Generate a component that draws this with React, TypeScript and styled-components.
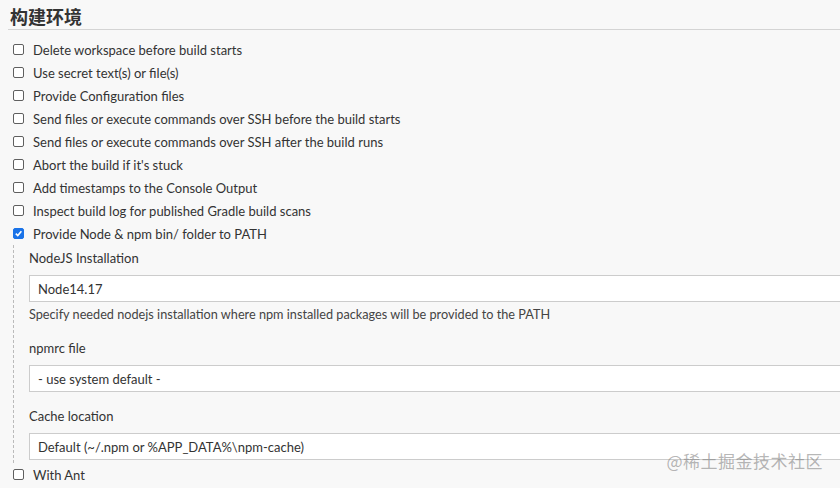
import React from "react";
import styled, { createGlobalStyle } from "styled-components";

const Global = createGlobalStyle`
  html, body { margin: 0; padding: 0; background: #f8f8f8; }
  body { font-family: Lato, "Noto Sans", "Noto Sans CJK SC", sans-serif; color: #333; }
`;

const Page = styled.div`
  width: 840px;
  height: 488px;
  overflow: hidden;
  position: relative;
  background: #f8f8f8;
  padding-left: 8px;
  box-sizing: border-box;
`;

const Title = styled.h2`
  margin: 0;
  padding: 4px 0 0 2px;
  height: 25px;
  font-size: 18px;
  font-weight: 700;
  line-height: 24px;
  color: #333;
  border-bottom: 1px solid #d4d4d4;
  font-family: "Noto Sans CJK SC", sans-serif;
`;

const List = styled.div`
  display: flex;
  flex-direction: column;
  padding-top: 8px;
`;

const Row = styled.label`
  display: flex;
  align-items: center;
  height: 23px;
  font-size: 13px;
  color: #333;
`;

const Box = styled.span<{ checked?: boolean }>`
  width: 11px;
  height: 11px;
  margin: 0 9px 0 5px;
  box-sizing: border-box;
  border-radius: 2px;
  border: 1px solid ${(p) => (p.checked ? "#1a73e8" : "#5f5f5f")};
  background: ${(p) => (p.checked ? "#1a73e8" : "#fff")};
  display: flex;
  align-items: center;
  justify-content: center;
`;

const Nested = styled.div`
  margin-left: 5px;
  border-left: 1px dashed #bbb;
  padding: 2px 0 3px 15px;
  display: flex;
  flex-direction: column;
`;

const FieldLabel = styled.div`
  font-size: 13px;
  line-height: 18px;
  padding: 2px 0 8px;
  color: #333;
`;

const Input = styled.div`
  height: 27px;
  box-sizing: border-box;
  margin-right: -20px;
  background: #fff;
  border: 1px solid #ccc;
  display: flex;
  align-items: center;
  padding-left: 8px;
  font-size: 13px;
  color: #333;
`;

const Help = styled.div`
  font-size: 12.7px;
  color: #444;
  padding: 3px 0 0;
  line-height: 18px;
`;

const Field = styled.div<{ gap: number }>`
  margin-top: ${(p) => p.gap}px;
  display: flex;
  flex-direction: column;
`;

const Watermark = styled.div`
  position: absolute;
  right: 17px;
  bottom: 15px;
  font-size: 17px;
  color: rgba(120,120,120,0.55);
  font-family: "Noto Sans CJK SC", sans-serif;
  letter-spacing: 0.5px;
`;

const Check = () => (
  <svg width="9" height="9" viewBox="0 0 10 10">
    <path d="M2 5.2 L4.2 7.3 L8.2 2.6" stroke="#fff" strokeWidth="1.8" fill="none" />
  </svg>
);

const items = [
  "Delete workspace before build starts",
  "Use secret text(s) or file(s)",
  "Provide Configuration files",
  "Send files or execute commands over SSH before the build starts",
  "Send files or execute commands over SSH after the build runs",
  "Abort the build if it's stuck",
  "Add timestamps to the Console Output",
  "Inspect build log for published Gradle build scans",
];

export default function App() {
  return (
    <Page>
      <Global />
      <Title>构建环境</Title>
      <List>
        {items.map((t) => (
          <Row key={t}>
            <Box />
            {t}
          </Row>
        ))}
        <Row>
          <Box checked>
            <Check />
          </Box>
          Provide Node &amp; npm bin/ folder to PATH
        </Row>
        <Nested>
          <Field gap={0}>
            <FieldLabel>NodeJS Installation</FieldLabel>
            <Input>Node14.17</Input>
            <Help>Specify needed nodejs installation where npm installed packages will be provided to the PATH</Help>
          </Field>
          <Field gap={14}>
            <FieldLabel>npmrc file</FieldLabel>
            <Input>- use system default -</Input>
          </Field>
          <Field gap={13}>
            <FieldLabel>Cache location</FieldLabel>
            <Input>Default (~/.npm or %APP_DATA%\npm-cache)</Input>
          </Field>
        </Nested>
        <Row>
          <Box />
          With Ant
        </Row>
      </List>
      <Watermark>@稀土掘金技术社区</Watermark>
    </Page>
  );
}
